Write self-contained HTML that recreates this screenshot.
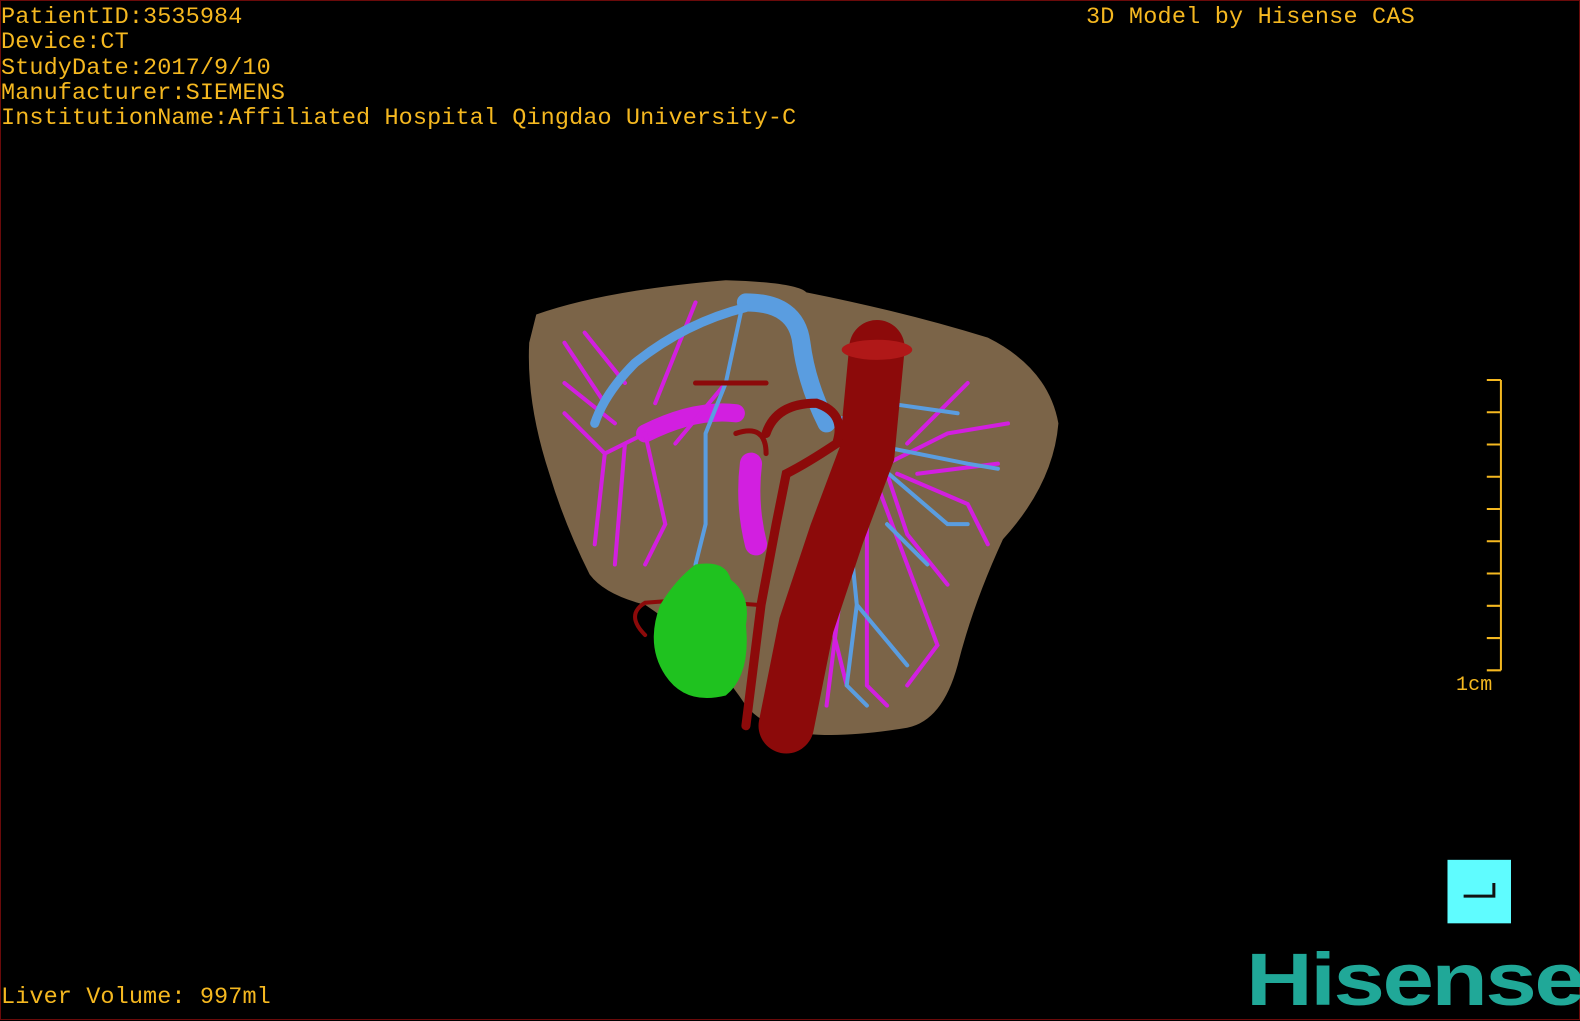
<!DOCTYPE html>
<html><head><meta charset="utf-8"><style>
html,body{margin:0;padding:0;background:#000;width:1580px;height:1020px;overflow:hidden}
#f{position:absolute;left:0;top:0;width:1580px;height:1020px;border:1px solid #6a0a0a;box-sizing:border-box}
.t{position:absolute;color:#f5b820;font-family:"Liberation Mono",monospace;font-size:23.5px;line-height:25.3px;white-space:pre;letter-spacing:0.1px}
</style></head><body>
<div id="f"></div>
<div class="t" style="left:1px;top:5px">PatientID:3535984
Device:CT
StudyDate:2017/9/10
Manufacturer:SIEMENS
InstitutionName:Affiliated Hospital Qingdao University-C</div>
<div class="t" style="left:1086px;top:5px;letter-spacing:0.2px">3D Model by Hisense CAS</div>
<div class="t" style="left:1px;top:985px">Liver Volume: 997ml</div>
<div class="t" style="left:1456px;top:673px;font-size:20px">1cm</div>
<svg width="1580" height="1020" style="position:absolute;left:0;top:0">
<g transform="scale(1.008)">
<g stroke="#f5b820" stroke-width="2" fill="none">
<path d="M1489 377V665M1475 377H1489M1475 409H1489M1475 441H1489M1475 473H1489M1475 505H1489M1475 537H1489M1475 569H1489M1475 601H1489M1475 633H1489M1475 665H1489"/>
</g>
<rect x="1436" y="853" width="63" height="63" fill="#5ffcff"/>
<path d="M1452 889H1482V876" stroke="#111" stroke-width="3" fill="none"/>
<path d="M532 312 Q600 288 720 278 Q790 280 800 290 Q900 310 980 335 Q1040 365 1050 420 Q1045 480 995 535 Q965 600 950 660 Q935 715 900 722 Q840 732 800 728 Q760 724 740 700 Q700 640 640 600 Q600 590 585 570 Q560 520 545 470 Q522 400 525 340 Z" fill="#7b6448"/>
<g stroke="#d21fe0" fill="none" stroke-linecap="round">
<path d="M640 430 Q690 405 730 410" stroke-width="18"/>
<path d="M745 460 Q740 500 750 540" stroke-width="22"/>
<g stroke-width="4">
<path d="M640 430 L600 450 L590 540 M600 450 L560 410 M620 440 L610 560 M640 430 L660 520 L640 560 M600 400 L560 340 M620 380 L580 330 M650 400 L690 300 M670 440 L720 380 M560 380 L610 420"/>
<path d="M880 460 L940 430 L1000 420 M890 470 L960 500 L980 540 M880 470 L900 530 L940 580 M870 480 L930 640 L900 680 M860 520 L860 680 L880 700 M840 540 L820 700 M900 440 L960 380 M910 470 L990 460 M820 600 L840 680"/>
</g></g>
<g stroke="#5a9de0" fill="none" stroke-linecap="round">
<path d="M740 300 Q790 300 795 340 Q800 380 820 420" stroke-width="18"/>
<path d="M740 305 Q680 320 630 360 Q600 390 590 420" stroke-width="9"/>
<g stroke-width="4"><path d="M735 310 L720 380 L700 430 L700 520 L690 560 M820 420 L880 400 L950 410 M860 440 L960 460 L990 465 M870 460 L940 520 L960 520 M840 500 L850 600 L840 680 L860 700 M850 600 L900 660 M880 520 L920 560"/></g>
</g>
<g stroke="#8c0a0a" fill="none" stroke-linecap="round">
<path d="M870 345 L860 450 L830 530 L800 620 L780 720" stroke-width="55"/>
<path d="M760 430 Q770 400 810 400 Q840 410 830 440 Q800 460 780 470 L770 520 L755 600 L740 720" stroke-width="9"/>
<path d="M730 430 Q760 420 760 450 M690 380 L760 380" stroke-width="5"/>
<path d="M750 600 L680 595 L640 598 Q620 610 640 630" stroke-width="4"/>
</g>
<ellipse cx="870" cy="347" rx="35" ry="10" fill="#b01818"/>
<path d="M690 560 Q720 555 725 575 Q745 590 740 620 Q745 670 720 690 Q680 700 660 670 Q640 640 655 600 Q670 575 690 560Z" fill="#1fc21f"/>
</g>
</svg>
<div style="position:absolute;left:1246px;top:940px;color:#20a898;font-family:'Liberation Sans',sans-serif;font-weight:bold;font-size:74px;letter-spacing:-2px;line-height:80px;transform:scaleX(1.25);transform-origin:left">Hisense</div>
</body></html>
